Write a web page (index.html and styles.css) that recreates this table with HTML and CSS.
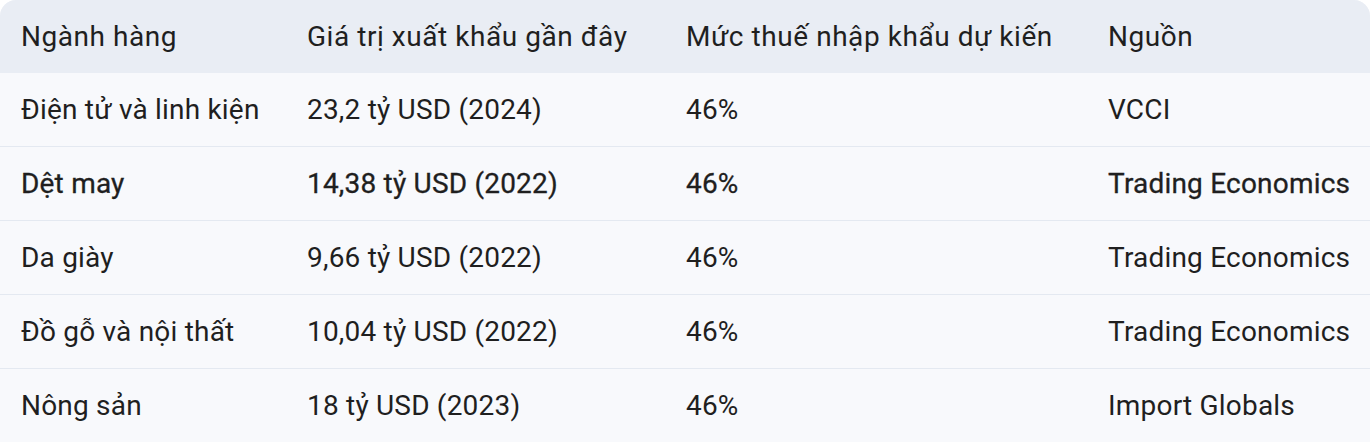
FILE: index.html
```html
<!DOCTYPE html>
<html lang="vi">
<head>
<meta charset="utf-8">
<title>Bảng thuế</title>
<link rel="stylesheet" href="styles.css">
</head>
<body>
<table class="data-table">
  <colgroup>
    <col class="c1"><col class="c2"><col class="c3"><col class="c4">
  </colgroup>
  <thead>
    <tr>
      <th>Ngành hàng</th>
      <th>Giá trị xuất khẩu gần đây</th>
      <th>Mức thuế nhập khẩu dự kiến</th>
      <th>Nguồn</th>
    </tr>
  </thead>
  <tbody>
    <tr><td>Điện tử và linh kiện</td><td>23,2 tỷ USD (2024)</td><td>46%</td><td>VCCI</td></tr>
    <tr class="active"><td>Dệt may</td><td>14,38 tỷ USD (2022)</td><td>46%</td><td>Trading Economics</td></tr>
    <tr><td>Da giày</td><td>9,66 tỷ USD (2022)</td><td>46%</td><td>Trading Economics</td></tr>
    <tr><td>Đồ gỗ và nội thất</td><td>10,04 tỷ USD (2022)</td><td>46%</td><td>Trading Economics</td></tr>
    <tr><td>Nông sản</td><td>18 tỷ USD (2023)</td><td>46%</td><td>Import Globals</td></tr>
  </tbody>
</table>
</body>
</html>
```
FILE: styles.css
```css
html, body {
  margin: 0;
  padding: 0;
  background: #ffffff;
}
body {
  font-family: Roboto, "Noto Sans", sans-serif;
  color: #1f1f1f;
}
.data-table {
  width: 1370px;
  border-collapse: separate;
  border-spacing: 0;
  table-layout: fixed;
  border-radius: 16px 16px 0 0;
  overflow: hidden;
  background: #f8f9fc;
}
.c1 { width: 286px; }
.c2 { width: 379px; }
.c3 { width: 422px; }
.c4 { width: 283px; }
.data-table th,
.data-table td {
  text-align: left;
  padding: 0 21px;
  font-size: 28px;
  font-weight: 400;
  white-space: nowrap;
  vertical-align: middle;
}
.data-table th {
  height: 73px;
  background: #e9edf4;
  letter-spacing: 0.55px;
}
.data-table td {
  height: 73px;
  border-top: 1px solid #e4e9f1;
  letter-spacing: 0.2px;
}
.data-table tbody tr:first-child td {
  border-top: none;
}
.data-table tr.active td {
  -webkit-text-stroke: 0.3px #1f1f1f;
}
```
